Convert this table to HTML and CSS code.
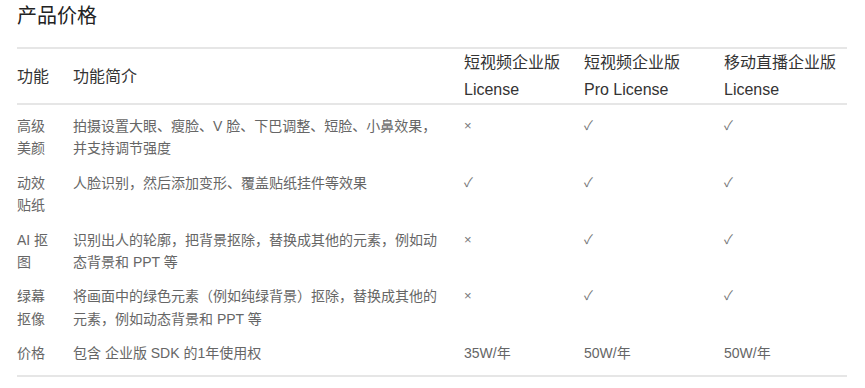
FILE: index.html
```html
<!DOCTYPE html>
<html lang="zh-CN">
<head>
<meta charset="utf-8">
<title>产品价格</title>
<link rel="stylesheet" href="styles.css">
</head>
<body>
<div class="page">
  <h2 class="title">产品价格</h2>
  <table class="price">
    <colgroup>
      <col class="c1"><col class="c2"><col class="c3"><col class="c4"><col class="c5">
    </colgroup>
    <thead>
      <tr>
        <th>功能</th>
        <th>功能简介</th>
        <th>短视频企业版<br>License</th>
        <th>短视频企业版<br>Pro License</th>
        <th>移动直播企业版<br>License</th>
      </tr>
    </thead>
    <tbody>
      <tr>
        <td>高级美颜</td>
        <td>拍摄设置大眼、瘦脸、V 脸、下巴调整、短脸、小鼻效果，并支持调节强度</td>
        <td class="mark">×</td><td class="mark">✓</td><td class="mark">✓</td>
      </tr>
      <tr>
        <td>动效贴纸</td>
        <td>人脸识别，然后添加变形、覆盖贴纸挂件等效果</td>
        <td class="mark">✓</td><td class="mark">✓</td><td class="mark">✓</td>
      </tr>
      <tr>
        <td>AI 抠图</td>
        <td>识别出人的轮廓，把背景抠除，替换成其他的元素，例如动态背景和 PPT 等</td>
        <td class="mark">×</td><td class="mark">✓</td><td class="mark">✓</td>
      </tr>
      <tr>
        <td>绿幕抠像</td>
        <td>将画面中的绿色元素（例如纯绿背景）抠除，替换成其他的元素，例如动态背景和 PPT 等</td>
        <td class="mark">×</td><td class="mark">✓</td><td class="mark">✓</td>
      </tr>
      <tr>
        <td>价格</td>
        <td>包含 企业版 SDK 的1年使用权</td>
        <td>35W/年</td><td>50W/年</td><td>50W/年</td>
      </tr>
    </tbody>
  </table>
</div>
</body>
</html>
```

FILE: styles.css
```css
html, body {
  margin: 0;
  padding: 0;
  background: #fff;
}

body {
  font-family: "Liberation Sans", "Noto Sans CJK SC", sans-serif;
  color: #666;
}

.page {
  padding: 2px 18px 0 17px;
}

.title {
  margin: 0 0 17px;
  font-size: 20px;
  line-height: 28px;
  font-weight: normal;
  color: #222;
}

.price {
  width: 830px;
  table-layout: fixed;
  border-collapse: collapse;
  border-top: 2px solid #e6e6e6;
  border-bottom: 2px solid #e6e6e6;
}

.c1 { width: 56px; }
.c2 { width: 391px; }
.c3 { width: 120px; }
.c4 { width: 140px; }
.c5 { width: 123px; }

.price th {
  padding: 0 12px 0 0;
  font-size: 16px;
  line-height: 27px;
  font-weight: normal;
  color: #333;
  text-align: left;
  vertical-align: middle;
  border-bottom: 2px solid #e6e6e6;
  white-space: nowrap;
}

.price td {
  padding: 6px 12px 6px 0;
  font-size: 14px;
  line-height: 22.4px;
  color: #666;
  text-align: left;
  vertical-align: top;
}

.price td:first-child {
  padding-right: 18px;
}

.price td:nth-child(2) {
  padding-right: 20px;
}

.price td.mark {
  font-size: 13px;
  color: #777;
}

.price tbody tr:first-child td {
  padding-top: 10px;
}

.price tbody tr:last-child td {
  padding-bottom: 10px;
}
```
